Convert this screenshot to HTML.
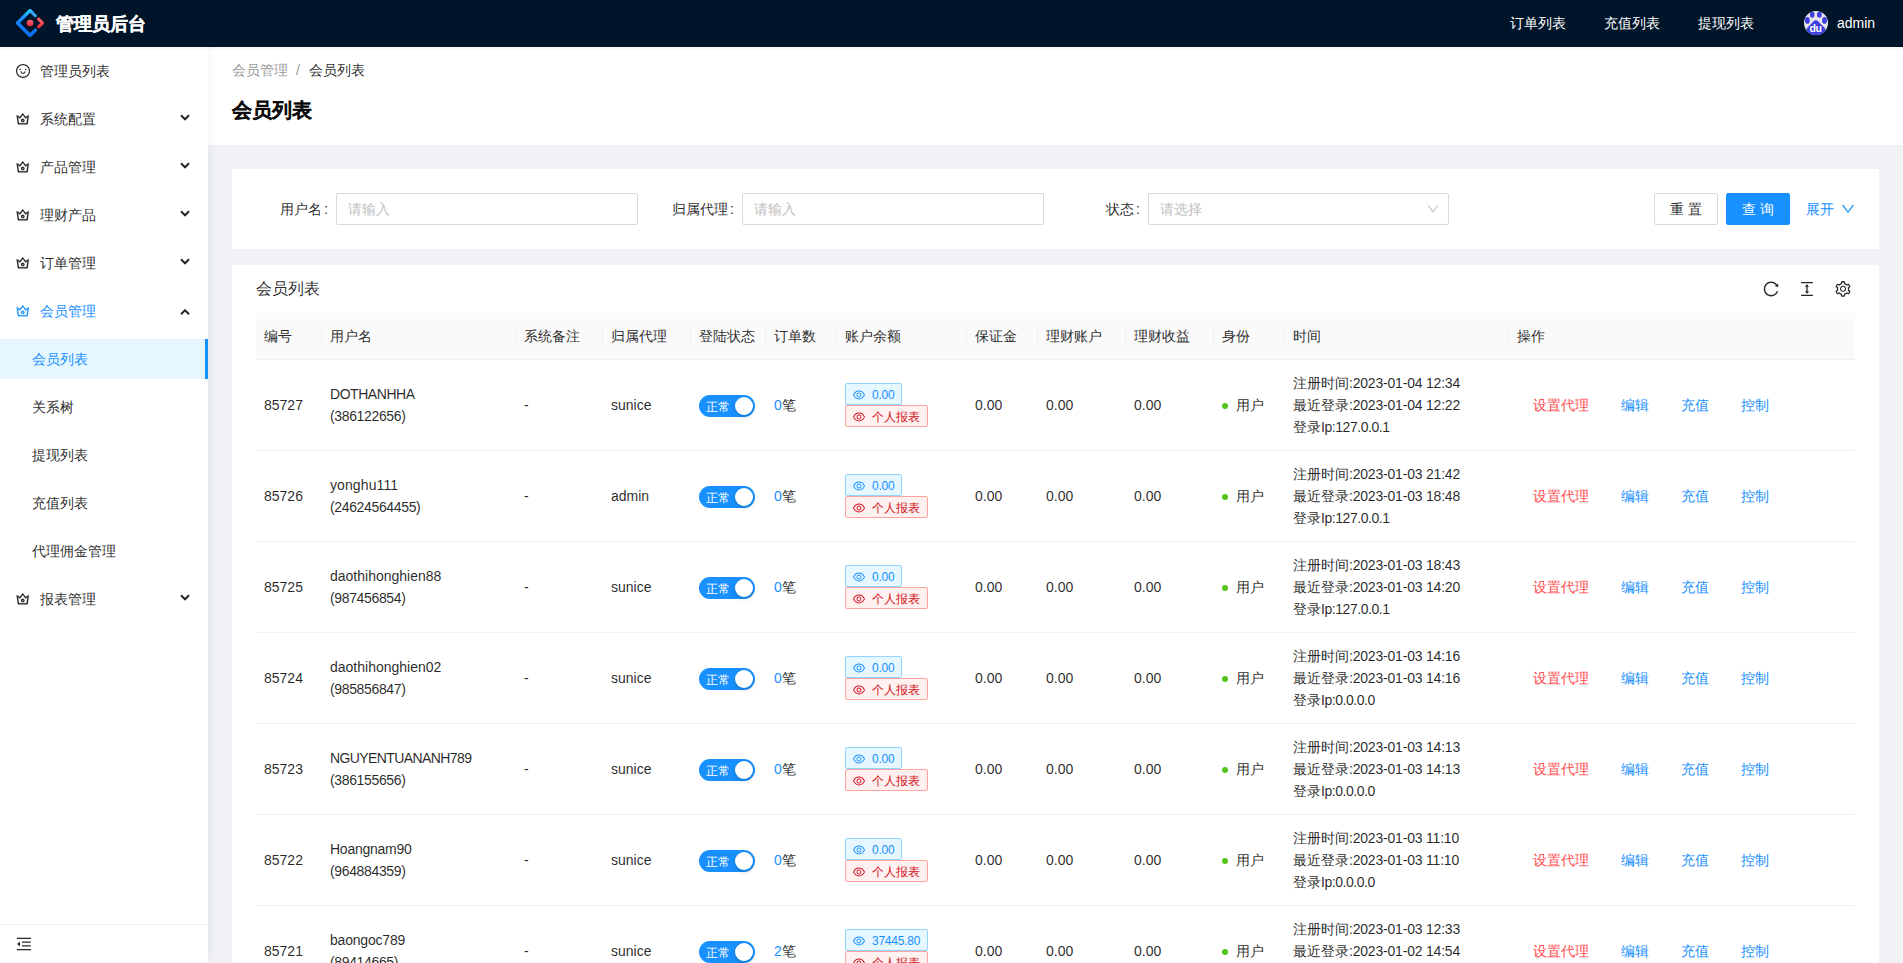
<!DOCTYPE html><html><head><meta charset="utf-8"><style>*{box-sizing:border-box;margin:0;padding:0}
html,body{width:1903px;height:963px;overflow:hidden;background:#f0f2f5;font-family:"Liberation Sans",sans-serif;font-size:14px;color:rgba(0,0,0,.85)}
.abs{position:absolute}
#hdr{position:absolute;left:0;top:0;width:1903px;height:47px;background:#001529;color:#fff;z-index:3;box-shadow:0 1px 4px rgba(0,21,41,.08)}
#hdr .title{position:absolute;left:56px;top:12px;font-size:18px;font-weight:bold;line-height:24px;color:#fff;-webkit-text-stroke:.3px #fff}
#hdr .nav{position:absolute;top:12px;line-height:22px;font-size:14px;color:#fff}
#side{position:absolute;left:0;top:47px;width:208px;height:916px;background:#fff;box-shadow:2px 0 8px 0 rgba(29,35,41,.05);z-index:2}
.mi{position:absolute;left:0;width:208px;height:40px;line-height:40px;font-size:14px;color:rgba(0,0,0,.85)}
.mi .tx{position:absolute;left:40px;top:0}
.mi .ar{position:absolute;left:180px;top:15px;width:10px;height:7px}
.mi.sub .tx{left:32px}
.mi.sel{background:#e6f7ff;color:#1890ff}
.mi.sel:after{content:"";position:absolute;right:0;top:0;width:3px;height:40px;background:#1890ff}
.mi.open{color:#1890ff}
#collapse{position:absolute;left:0;top:877px;width:208px;height:39px;border-top:1px solid #f0f0f0}
#ph{position:absolute;left:208px;top:47px;width:1695px;height:98px;background:#fff}
.bc{position:absolute;left:24px;top:12px;line-height:22px;font-size:14px}
.pt{position:absolute;left:24px;top:47px;line-height:32px;font-size:20px;font-weight:bold;color:rgba(0,0,0,.85);-webkit-text-stroke:.3px rgba(0,0,0,.85)}
.card{position:absolute;background:#fff}
.lbl{position:absolute;top:24px;line-height:32px;text-align:right;font-size:14px;padding-right:8px}
.inp{position:absolute;top:24px;height:32px;border:1px solid #d9d9d9;border-radius:2px;line-height:30px;padding-left:11px;color:#bfbfbf}
.btn{position:absolute;top:24px;height:32px;border-radius:2px;line-height:30px;text-align:center;font-size:14px}
table{border-collapse:collapse;table-layout:fixed}
th{background:#fafafa;font-weight:normal;text-align:left;height:46px;padding:0 8px;border-bottom:1px solid #f0f0f0;position:relative;line-height:22px}
th .sep{position:absolute;right:0;top:12px;width:1px;height:22px;background:#f0f0f0}
td{height:91px;padding:0 8px;border-bottom:1px solid #f0f0f0;line-height:22px;vertical-align:middle;white-space:nowrap}
.sw{display:inline-block;position:relative;top:1px;width:56px;height:22px;border-radius:11px;background:#1890ff;vertical-align:middle}
.sw .k{position:absolute;left:36px;top:2px;width:18px;height:18px;border-radius:50%;background:#fff;box-shadow:0 2px 4px rgba(0,35,11,.2)}
.sw .t{position:absolute;left:7px;top:1px;line-height:22px;font-size:12px;color:#fff}
.tags{display:inline-block;vertical-align:middle}
.tag{display:block;position:relative;width:max-content;height:22px;line-height:22px;font-size:12px;padding:0 7px 0 26px;border-radius:2px;border:1px solid;white-space:nowrap}
.tag svg{position:absolute;left:6px;top:4.4px}
.tb{color:#1890ff;background:#e6f7ff;border-color:#91d5ff}
.tr{color:#cf1322;background:#fff1f0;border-color:#ffa39e}
.dot{display:inline-block;width:6px;height:6px;border-radius:50%;background:#52c41a;vertical-align:middle;position:relative;top:0;margin-right:8px}
.act a{display:inline-block;padding:0 16px;color:#1890ff;text-decoration:none}
.act a.red{color:#ff4d4f}
</style></head><body>
<div id="hdr">
<svg class="abs" style="left:16px;top:9px" width="28" height="28" viewBox="0 0 200 200">
<defs>
<linearGradient x1="62.1%" y1="0%" x2="108.2%" y2="37.9%" id="lg1"><stop stop-color="#4285EB" offset="0%"/><stop stop-color="#2EC7FF" offset="100%"/></linearGradient>
<linearGradient x1="69.6%" y1="0%" x2="54.0%" y2="108.5%" id="lg2"><stop stop-color="#29CDFF" offset="0%"/><stop stop-color="#148EFF" offset="37.9%"/><stop stop-color="#0A60FF" offset="100%"/></linearGradient>
<linearGradient x1="69.7%" y1="-13%" x2="16.7%" y2="117.6%" id="lg3"><stop stop-color="#FA816E" offset="0%"/><stop stop-color="#F74A5C" offset="41.5%"/><stop stop-color="#F51D2C" offset="100%"/></linearGradient>
<linearGradient x1="68.1%" y1="-35.7%" x2="30.4%" y2="114.9%" id="lg4"><stop stop-color="#FA8E7D" offset="0%"/><stop stop-color="#F74A5C" offset="51.3%"/><stop stop-color="#F51D2C" offset="100%"/></linearGradient>
</defs>
<path fill="url(#lg1)" d="M91.588 4.177L4.18 91.513c-4.7 4.695-4.7 12.279 0 16.974l87.408 87.336c4.7 4.696 12.29 4.696 16.989 0l36.649-36.619c4.208-4.205 4.208-11.023 0-15.228-4.208-4.205-11.032-4.205-15.24 0l-27.783 27.76c-1.17 1.169-2.945 1.169-4.115 0l-69.801-69.744c-1.17-1.169-1.17-2.942 0-4.111l69.801-69.744c1.17-1.169 2.945-1.169 4.115 0l27.783 27.76c4.208 4.205 11.032 4.205 15.24 0 4.208-4.205 4.208-11.023 0-15.228L108.58 4.056c-4.718-4.594-12.311-4.557-16.992.121z"/>
<path fill="url(#lg2)" d="M91.588 4.177L4.18 91.513c-4.7 4.695-4.7 12.279 0 16.974l87.408 87.336c4.7 4.696 12.29 4.696 16.989 0l36.649-36.619c4.208-4.205 4.208-11.023 0-15.228-4.208-4.205-11.032-4.205-15.24 0l-27.783 27.76c-1.17 1.169-2.945 1.169-4.115 0l-69.801-69.744c-1.17-1.169-1.17-2.942 0-4.111l69.801-69.744c2.912-2.511 7.664-7.596 14.642-8.785 5.186-.884 10.856 1.061 17.009 5.836-4.114-4.11-11.167-11.155-21.158-21.133-4.718-4.594-12.311-4.557-16.992.121z"/>
<path fill="url(#lg3)" d="M153.686 135.855c4.208 4.205 11.032 4.205 15.24 0l27.034-27.012c4.7-4.696 4.7-12.28.001-16.974l-27.27-27.15c-4.218-4.2-11.043-4.195-15.254.013-4.209 4.205-4.209 11.023 0 15.228l18.418 18.403c.924.923.924 2.351 0 3.274l-18.168 18.152c-4.209 4.205-4.209 11.023 0 15.228z"/>
<ellipse fill="url(#lg4)" cx="100.52" cy="100.44" rx="23.6" ry="23.58"/>
</svg>
<div class="title">管理员后台</div>
<div class="nav" style="left:1510px">订单列表</div>
<div class="nav" style="left:1604px">充值列表</div>
<div class="nav" style="left:1698px">提现列表</div>
<svg class="abs" style="left:1804px;top:11px" width="24" height="24" viewBox="0 0 24 24">
<defs><clipPath id="avc"><circle cx="12" cy="12" r="12"/></clipPath></defs>
<circle cx="12" cy="12" r="12" fill="#e6e6e6"/>
<g clip-path="url(#avc)" fill="#3d3fe3">
<ellipse cx="8.25" cy="3.8" rx="2.3" ry="3"/><ellipse cx="15.4" cy="3.8" rx="2.4" ry="3"/>
<ellipse cx="3.35" cy="9.4" rx="2.4" ry="3.4"/><ellipse cx="20.5" cy="9.4" rx="2.4" ry="3.4"/>
<path d="M11.8 9.2 C10.2 9.2 9 10.6 7.6 12.6 C6.2 14.4 3.2 16.2 2.4 18.6 L4 24 L20 24 L21.6 18.6 C20.8 16.2 17.6 14.4 16.2 12.6 C14.8 10.6 13.4 9.2 11.8 9.2Z"/>
</g>
<text x="11.5" y="21.4" text-anchor="middle" font-family="Liberation Sans" font-weight="bold" font-size="10.5" letter-spacing="-0.3" fill="#fff">du</text>
</svg>
<div class="nav" style="left:1837px">admin</div>
</div>
<div id="side">
<div class="mi" style="top:4px">
<svg style="position:absolute;left:15px;top:12px" width="16" height="16" viewBox="0 0 1024 1024"><path fill="rgba(0,0,0,.85)" d="M288 421a48 48 0 1096 0 48 48 0 10-96 0zm352 0a48 48 0 1096 0 48 48 0 10-96 0zM512 64C264.6 64 64 264.6 64 512s200.6 448 448 448 448-200.6 448-448S759.4 64 512 64zm263 711c-34.2 34.2-74 61-118.3 79.8C611 874.2 562.3 884 512 884c-50.3 0-99-9.8-144.8-29.2A370.4 370.4 0 01248.9 775c-34.2-34.2-61-74-79.8-118.3C149.8 611 140 562.3 140 512s9.8-99 29.2-144.8A370.4 370.4 0 01249 248.9c34.2-34.2 74-61 118.3-79.8C413 149.8 461.7 140 512 140c50.3 0 99 9.8 144.8 29.2A370.4 370.4 0 01775.1 249c34.2 34.2 61 74 79.8 118.3C874.2 413 884 461.7 884 512s-9.8 99-29.2 144.8A368.89 368.89 0 01775 775zM664 533h-48.1c-4.2 0-7.8 3.2-8.1 7.4C604 589.9 562.5 629 512 629s-92.1-39.1-95.8-88.6c-.3-4.2-3.9-7.4-8.1-7.4H360a8 8 0 00-8 8.4c4.4 84.3 74.5 151.6 160 151.6s155.6-67.3 160-151.6a8 8 0 00-8-8.4z"/></svg>
<span class="tx">管理员列表</span>
</div>
<div class="mi" style="top:52px">
<svg style="position:absolute;left:15.3px;top:12.4px" width="15.5" height="15.5" viewBox="0 0 1024 1024"><path fill="rgba(0,0,0,.85)" stroke="rgba(0,0,0,.85)" stroke-width="22" d="M899.6 276.5L705 396.4 518.4 147.5a8.06 8.06 0 00-12.9 0L319 396.4 124.3 276.5c-5.7-3.5-13.1 1.2-12.2 7.9L188.5 865c1.1 7.9 7.9 14 16 14h615.1c8 0 14.9-6 15.9-14l76.4-580.6c.8-6.7-6.5-11.4-12.3-7.9zm-126 534.1H250.3l-53.8-409.4 139.8 86.1L512 252.9l175.7 234.4 139.8-86.1-53.9 409.4zM512 509c-62.1 0-112.6 50.5-112.6 112.6S449.9 734.2 512 734.2s112.6-50.5 112.6-112.6S574.1 509 512 509zm0 160.9c-26.6 0-48.2-21.6-48.2-48.3 0-26.6 21.6-48.3 48.2-48.3s48.2 21.6 48.2 48.3c0 26.6-21.6 48.3-48.2 48.3z"/></svg>
<span class="tx">系统配置</span>
<svg class="ar" viewBox="0 0 10 7"><path d="M1 1.3 L5 5.3 L9 1.3" fill="none" stroke="rgba(0,0,0,.85)" stroke-width="2"/></svg>
</div>
<div class="mi" style="top:100px">
<svg style="position:absolute;left:15.3px;top:12.4px" width="15.5" height="15.5" viewBox="0 0 1024 1024"><path fill="rgba(0,0,0,.85)" stroke="rgba(0,0,0,.85)" stroke-width="22" d="M899.6 276.5L705 396.4 518.4 147.5a8.06 8.06 0 00-12.9 0L319 396.4 124.3 276.5c-5.7-3.5-13.1 1.2-12.2 7.9L188.5 865c1.1 7.9 7.9 14 16 14h615.1c8 0 14.9-6 15.9-14l76.4-580.6c.8-6.7-6.5-11.4-12.3-7.9zm-126 534.1H250.3l-53.8-409.4 139.8 86.1L512 252.9l175.7 234.4 139.8-86.1-53.9 409.4zM512 509c-62.1 0-112.6 50.5-112.6 112.6S449.9 734.2 512 734.2s112.6-50.5 112.6-112.6S574.1 509 512 509zm0 160.9c-26.6 0-48.2-21.6-48.2-48.3 0-26.6 21.6-48.3 48.2-48.3s48.2 21.6 48.2 48.3c0 26.6-21.6 48.3-48.2 48.3z"/></svg>
<span class="tx">产品管理</span>
<svg class="ar" viewBox="0 0 10 7"><path d="M1 1.3 L5 5.3 L9 1.3" fill="none" stroke="rgba(0,0,0,.85)" stroke-width="2"/></svg>
</div>
<div class="mi" style="top:148px">
<svg style="position:absolute;left:15.3px;top:12.4px" width="15.5" height="15.5" viewBox="0 0 1024 1024"><path fill="rgba(0,0,0,.85)" stroke="rgba(0,0,0,.85)" stroke-width="22" d="M899.6 276.5L705 396.4 518.4 147.5a8.06 8.06 0 00-12.9 0L319 396.4 124.3 276.5c-5.7-3.5-13.1 1.2-12.2 7.9L188.5 865c1.1 7.9 7.9 14 16 14h615.1c8 0 14.9-6 15.9-14l76.4-580.6c.8-6.7-6.5-11.4-12.3-7.9zm-126 534.1H250.3l-53.8-409.4 139.8 86.1L512 252.9l175.7 234.4 139.8-86.1-53.9 409.4zM512 509c-62.1 0-112.6 50.5-112.6 112.6S449.9 734.2 512 734.2s112.6-50.5 112.6-112.6S574.1 509 512 509zm0 160.9c-26.6 0-48.2-21.6-48.2-48.3 0-26.6 21.6-48.3 48.2-48.3s48.2 21.6 48.2 48.3c0 26.6-21.6 48.3-48.2 48.3z"/></svg>
<span class="tx">理财产品</span>
<svg class="ar" viewBox="0 0 10 7"><path d="M1 1.3 L5 5.3 L9 1.3" fill="none" stroke="rgba(0,0,0,.85)" stroke-width="2"/></svg>
</div>
<div class="mi" style="top:196px">
<svg style="position:absolute;left:15.3px;top:12.4px" width="15.5" height="15.5" viewBox="0 0 1024 1024"><path fill="rgba(0,0,0,.85)" stroke="rgba(0,0,0,.85)" stroke-width="22" d="M899.6 276.5L705 396.4 518.4 147.5a8.06 8.06 0 00-12.9 0L319 396.4 124.3 276.5c-5.7-3.5-13.1 1.2-12.2 7.9L188.5 865c1.1 7.9 7.9 14 16 14h615.1c8 0 14.9-6 15.9-14l76.4-580.6c.8-6.7-6.5-11.4-12.3-7.9zm-126 534.1H250.3l-53.8-409.4 139.8 86.1L512 252.9l175.7 234.4 139.8-86.1-53.9 409.4zM512 509c-62.1 0-112.6 50.5-112.6 112.6S449.9 734.2 512 734.2s112.6-50.5 112.6-112.6S574.1 509 512 509zm0 160.9c-26.6 0-48.2-21.6-48.2-48.3 0-26.6 21.6-48.3 48.2-48.3s48.2 21.6 48.2 48.3c0 26.6-21.6 48.3-48.2 48.3z"/></svg>
<span class="tx">订单管理</span>
<svg class="ar" viewBox="0 0 10 7"><path d="M1 1.3 L5 5.3 L9 1.3" fill="none" stroke="rgba(0,0,0,.85)" stroke-width="2"/></svg>
</div>
<div class="mi open" style="top:244px">
<svg style="position:absolute;left:15.3px;top:12.4px" width="15.5" height="15.5" viewBox="0 0 1024 1024"><path fill="#1890ff" stroke="#1890ff" stroke-width="22" d="M899.6 276.5L705 396.4 518.4 147.5a8.06 8.06 0 00-12.9 0L319 396.4 124.3 276.5c-5.7-3.5-13.1 1.2-12.2 7.9L188.5 865c1.1 7.9 7.9 14 16 14h615.1c8 0 14.9-6 15.9-14l76.4-580.6c.8-6.7-6.5-11.4-12.3-7.9zm-126 534.1H250.3l-53.8-409.4 139.8 86.1L512 252.9l175.7 234.4 139.8-86.1-53.9 409.4zM512 509c-62.1 0-112.6 50.5-112.6 112.6S449.9 734.2 512 734.2s112.6-50.5 112.6-112.6S574.1 509 512 509zm0 160.9c-26.6 0-48.2-21.6-48.2-48.3 0-26.6 21.6-48.3 48.2-48.3s48.2 21.6 48.2 48.3c0 26.6-21.6 48.3-48.2 48.3z"/></svg>
<span class="tx">会员管理</span>
<svg class="ar" style="top:18px" viewBox="0 0 10 7"><path d="M1 5.3 L5 1.3 L9 5.3" fill="none" stroke="rgba(0,0,0,.85)" stroke-width="2"/></svg>
</div>
<div class="mi sub sel" style="top:292px">
<span class="tx">会员列表</span>
</div>
<div class="mi sub" style="top:340px">
<span class="tx">关系树</span>
</div>
<div class="mi sub" style="top:388px">
<span class="tx">提现列表</span>
</div>
<div class="mi sub" style="top:436px">
<span class="tx">充值列表</span>
</div>
<div class="mi sub" style="top:484px">
<span class="tx">代理佣金管理</span>
</div>
<div class="mi" style="top:532px">
<svg style="position:absolute;left:15.3px;top:12.4px" width="15.5" height="15.5" viewBox="0 0 1024 1024"><path fill="rgba(0,0,0,.85)" stroke="rgba(0,0,0,.85)" stroke-width="22" d="M899.6 276.5L705 396.4 518.4 147.5a8.06 8.06 0 00-12.9 0L319 396.4 124.3 276.5c-5.7-3.5-13.1 1.2-12.2 7.9L188.5 865c1.1 7.9 7.9 14 16 14h615.1c8 0 14.9-6 15.9-14l76.4-580.6c.8-6.7-6.5-11.4-12.3-7.9zm-126 534.1H250.3l-53.8-409.4 139.8 86.1L512 252.9l175.7 234.4 139.8-86.1-53.9 409.4zM512 509c-62.1 0-112.6 50.5-112.6 112.6S449.9 734.2 512 734.2s112.6-50.5 112.6-112.6S574.1 509 512 509zm0 160.9c-26.6 0-48.2-21.6-48.2-48.3 0-26.6 21.6-48.3 48.2-48.3s48.2 21.6 48.2 48.3c0 26.6-21.6 48.3-48.2 48.3z"/></svg>
<span class="tx">报表管理</span>
<svg class="ar" viewBox="0 0 10 7"><path d="M1 1.3 L5 5.3 L9 1.3" fill="none" stroke="rgba(0,0,0,.85)" stroke-width="2"/></svg>
</div>
<div id="collapse"><svg style="position:absolute;left:15px;top:9.5px" width="18" height="18" viewBox="0 0 1024 1024"><path fill="rgba(0,0,0,.85)" d="M408 442h480c4.4 0 8-3.6 8-8v-56c0-4.4-3.6-8-8-8H408c-4.4 0-8 3.6-8 8v56c0 4.4 3.6 8 8 8zm-8 204c0 4.4 3.6 8 8 8h480c4.4 0 8-3.6 8-8v-56c0-4.4-3.6-8-8-8H408c-4.4 0-8 3.6-8 8v56zm504-486H120c-4.4 0-8 3.6-8 8v56c0 4.4 3.6 8 8 8h784c4.4 0 8-3.6 8-8v-56c0-4.4-3.6-8-8-8zm0 632H120c-4.4 0-8 3.6-8 8v56c0 4.4 3.6 8 8 8h784c4.4 0 8-3.6 8-8v-56c0-4.4-3.6-8-8-8zM115.4 518.9L271.7 642c5.8 4.6 14.4.5 14.4-6.9V388.9c0-7.4-8.5-11.5-14.4-6.9L115.4 505.1a8.74 8.74 0 000 13.8z"/></svg></div>
</div>
<div id="ph">
<div class="bc"><span style="color:rgba(0,0,0,.45)">会员管理</span><span style="color:rgba(0,0,0,.45);padding:0 9px 0 8px">/</span><span>会员列表</span></div>
<div class="pt">会员列表</div>
</div>
<div class="card" id="search" style="left:232px;top:169px;width:1647px;height:80px">
<div class="lbl" style="left:24px;width:80px">用户名<span style="margin-left:2px">:</span></div>
<div class="inp" style="left:104px;width:302px">请输入
</div>
<div class="lbl" style="left:430px;width:80px">归属代理<span style="margin-left:2px">:</span></div>
<div class="inp" style="left:510px;width:302px">请输入
</div>
<div class="lbl" style="left:836px;width:80px">状态<span style="margin-left:2px">:</span></div>
<div class="inp" style="left:916px;width:301px">请选择
<svg style="position:absolute;left:277px;top:7.5px" width="14" height="14" viewBox="0 0 1024 1024"><path fill="#bfbfbf" d="M884 256h-75c-5.1 0-9.9 2.5-12.9 6.6L512 654.2 227.9 262.6c-3-4.1-7.8-6.6-12.9-6.6h-75c-6.5 0-10.3 7.4-6.5 12.7l352.6 486.1c12.8 17.6 39 17.6 51.700 0l352.6-486.1c3.9-5.3.1-12.7-6.4-12.7z"/></svg>
</div>
<div class="btn" style="left:1422px;width:64px;border:1px solid #d9d9d9;color:rgba(0,0,0,.85)">重 置</div>
<div class="btn" style="left:1494px;width:64px;background:#1890ff;color:#fff;border:1px solid #1890ff">查 询</div>
<div class="abs" style="left:1574px;top:24px;line-height:32px;color:#1890ff">展开</div>
<svg class="abs" style="left:1608px;top:31.5px;" width="16" height="16" viewBox="0 0 1024 1024"><path fill="#1890ff" d="M884 256h-75c-5.1 0-9.9 2.5-12.9 6.6L512 654.2 227.9 262.6c-3-4.1-7.8-6.6-12.9-6.6h-75c-6.5 0-10.3 7.4-6.5 12.7l352.6 486.1c12.8 17.6 39 17.6 51.700 0l352.6-486.1c3.9-5.3.1-12.7-6.4-12.7z"/></svg>
</div>
<div class="card" id="tcard" style="left:232px;top:265px;width:1647px;height:720px;border-radius:2px">
<div class="abs" style="left:24px;top:12px;line-height:24px;font-size:16px;color:rgba(0,0,0,.85)">会员列表</div>
<svg class="abs" style="left:1530px;top:15px;" width="18" height="18" viewBox="0 0 1024 1024"><path fill="rgba(0,0,0,.85)" d="M909.1 209.3l-56.4 44.1C775.8 155.1 656.2 92 521.9 92 290 92 102.3 279.5 102 511.5 101.7 743.7 289.8 932 521.9 932c181.3 0 335.8-115 394.6-276.1 1.5-4.2-.7-8.9-4.9-10.3l-56.7-19.5a8 8 0 00-10.1 4.8c-1.8 5-3.8 10-5.900 14.9-17.3 41-42.1 77.8-73.7 109.4A344.77 344.77 0 01655.9 829c-42.3 17.9-87.4 27-133.8 27-46.5 0-91.5-9.1-133.8-27A341.5 341.5 0 01279 755.2a342.16 342.16 0 01-73.7-109.4c-17.9-42.4-27-87.4-27-133.9s9.1-91.5 27-133.9c17.3-41 42.1-77.8 73.7-109.4 31.6-31.6 68.4-56.4 109.3-73.8 42.3-17.9 87.4-27 133.8-27 46.5 0 91.5 9.1 133.8 27a341.5 341.5 0 01109.3 73.8c9.9 9.9 19.2 20.4 27.8 31.4l-60.2 47a8 8 0 003 14.1l175.6 43c5 1.2 9.9-2.6 9.9-7.7l.8-180.9c-.1-6.6-7.8-10.3-13-6.2z"/></svg>
<svg class="abs" style="left:1566px;top:15px;" width="18" height="18" viewBox="0 0 1024 1024"><path fill="rgba(0,0,0,.85)" d="M840 836H184c-4.4 0-8 3.6-8 8v60c0 4.4 3.6 8 8 8h656c4.4 0 8-3.6 8-8v-60c0-4.4-3.6-8-8-8zm0-724H184c-4.4 0-8 3.6-8 8v60c0 4.4 3.6 8 8 8h656c4.4 0 8-3.6 8-8v-60c0-4.4-3.6-8-8-8zM610.8 378c6 0 9.4-7 5.7-11.7L515.7 238.7a7.14 7.14 0 00-11.3 0L403.6 366.3a7.23 7.23 0 005.7 11.7H476v268h-62.8c-6 0-9.4 7-5.700 11.7l100.8 127.5c2.9 3.7 8.5 3.7 11.3 0l100.8-127.5c3.7-4.7.4-11.700-5.7-11.7H548V378h62.8z"/></svg>
<svg class="abs" style="left:1602px;top:15px;" width="18" height="18" viewBox="0 0 1024 1024"><path fill="rgba(0,0,0,.85)" d="M924.8 625.7l-65.5-56c3.1-19 4.7-38.4 4.7-57.8s-1.6-38.8-4.7-57.8l65.5-56a32.03 32.03 0 009.3-35.2l-.9-2.6a443.74 443.74 0 00-79.7-137.9l-1.8-2.1a32.12 32.12 0 00-35.1-9.5l-81.3 28.9c-30-24.6-63.5-44-99.7-57.6l-15.7-85a32.05 32.05 0 00-25.8-25.7l-2.7-.5c-52.1-9.4-106.9-9.4-159 0l-2.7.5a32.05 32.05 0 00-25.8 25.7l-15.8 85.4a351.86 351.86 0 00-99 57.4l-81.9-29.1a32 32 0 00-35.1 9.5l-1.8 2.1a446.02 446.02 0 00-79.7 137.9l-.9 2.6c-4.5 12.5-.8 26.5 9.3 35.2l66.3 56.6c-3.100 18.8-4.6 38-4.6 57.1 0 19.2 1.5 38.4 4.6 57.1L99 625.5a32.03 32.03 0 00-9.3 35.2l.9 2.6c18.1 50.4 44.9 96.9 79.7 137.9l1.8 2.1a32.12 32.12 0 0035.1 9.5l81.9-29.1c29.8 24.5 63.1 43.9 99 57.4l15.8 85.4a32.05 32.05 0 0025.8 25.7l2.7.5a449.4 449.4 0 00159 0l2.7-.5a32.05 32.05 0 0025.8-25.7l15.7-85a350 350 0 0099.7-57.6l81.3 28.9a32 32 0 0035.1-9.5l1.8-2.1c34.8-41.1 61.6-87.5 79.7-137.9l.9-2.6c4.5-12.3.8-26.3-9.3-35zM788.3 465.9c2.5 15.1 3.8 30.6 3.8 46.1s-1.3 31-3.8 46.1l-6.6 40.1 74.7 63.9a370.03 370.03 0 01-42.6 73.6L721 702.8l-31.4 25.8c-23.9 19.6-50.5 35-79.3 45.8l-38.1 14.3-17.900 97a377.5 377.5 0 01-85 0l-17.9-97.2-37.8-14.5c-28.5-10.8-55-26.2-78.7-45.7l-31.4-25.9-93.4 33.2c-17-22.9-31.2-47.6-42.6-73.6l75.5-64.5-6.5-40c-2.4-14.9-3.7-30.3-3.7-45.5 0-15.3 1.2-30.6 3.7-45.5l6.5-40-75.5-64.5c11.3-26.1 25.6-50.7 42.6-73.6l93.4 33.2 31.4-25.9c23.7-19.5 50.2-34.9 78.700-45.7l37.9-14.3 17.9-97.2c28.1-3.2 56.8-3.2 85 0l17.9 97 38.1 14.3c28.7 10.8 55.4 26.2 79.3 45.8l31.4 25.8 92.8-32.9c17 22.9 31.2 47.6 42.6 73.6L781.8 426l6.5 39.9zM512 326c-97.2 0-176 78.8-176 176s78.8 176 176 176 176-78.8 176-176-78.8-176-176-176zm79.2 255.2A111.6 111.6 0 01512 614c-29.9 0-58-11.7-79.2-32.8A111.6 111.6 0 01400 502c0-29.9 11.7-58 32.8-79.2C454 401.6 482.1 390 512 390c29.9 0 58 11.6 79.2 32.8A111.6 111.6 0 01624 502c0 29.9-11.7 58-32.8 79.2z"/></svg>
<table class="abs" style="left:24px;top:48px;width:1599px">
<colgroup><col style="width:66px"><col style="width:194px"><col style="width:87px"><col style="width:88px"><col style="width:75px"><col style="width:71px"><col style="width:130px"><col style="width:71px"><col style="width:88px"><col style="width:88px"><col style="width:71px"><col style="width:224px"><col style="width:346px"></colgroup>
<tr><th>编号<i class="sep"></i></th><th>用户名<i class="sep"></i></th><th>系统备注<i class="sep"></i></th><th>归属代理<i class="sep"></i></th><th>登陆状态<i class="sep"></i></th><th>订单数<i class="sep"></i></th><th>账户余额<i class="sep"></i></th><th>保证金<i class="sep"></i></th><th>理财账户<i class="sep"></i></th><th>理财收益<i class="sep"></i></th><th>身份<i class="sep"></i></th><th>时间<i class="sep"></i></th><th>操作</th></tr>
<tr>
<td>85727</td>
<td><span style="letter-spacing:-0.45px">DOTHANHHA</span><br><span style="letter-spacing:-.35px">(386122656)</span></td>
<td>-</td>
<td>sunice</td>
<td><span class="sw"><span class="t">正常</span><span class="k"></span></span></td>
<td><span style="color:#1890ff">0</span>笔</td>
<td><span class="tags"><span class="tag tb"><svg style="" width="14" height="14" viewBox="0 0 1024 1024"><path fill="#1890ff" d="M942.2 486.2C847.4 286.5 704.1 186 512 186c-192.2 0-335.4 100.5-430.2 300.3a60.3 60.3 0 000 51.5C176.6 737.5 319.9 838 512 838c192.2 0 335.4-100.5 430.2-300.3 7.7-16.2 7.7-35 0-51.5zM512 766c-161.3 0-279.4-81.8-362.7-254C232.6 339.8 350.7 258 512 258c161.3 0 279.4 81.8 362.7 254C791.5 684.2 673.4 766 512 766zm-4-430c-97.2 0-176 78.8-176 176s78.8 176 176 176 176-78.8 176-176-78.8-176-176-176zm0 288c-61.9 0-112-50.1-112-112s50.1-112 112-112 112 50.1 112 112-50.1 112-112 112z"/></svg><span style="letter-spacing:-.25px">0.00</span></span><span class="tag tr"><svg style="" width="14" height="14" viewBox="0 0 1024 1024"><path fill="#cf1322" d="M942.2 486.2C847.4 286.5 704.1 186 512 186c-192.2 0-335.4 100.5-430.2 300.3a60.3 60.3 0 000 51.5C176.6 737.5 319.9 838 512 838c192.2 0 335.4-100.5 430.2-300.3 7.7-16.2 7.7-35 0-51.5zM512 766c-161.3 0-279.4-81.8-362.7-254C232.6 339.8 350.7 258 512 258c161.3 0 279.4 81.8 362.7 254C791.5 684.2 673.4 766 512 766zm-4-430c-97.2 0-176 78.8-176 176s78.8 176 176 176 176-78.8 176-176-78.8-176-176-176zm0 288c-61.9 0-112-50.1-112-112s50.1-112 112-112 112 50.1 112 112-50.1 112-112 112z"/></svg>个人报表</span></span></td>
<td>0.00</td><td>0.00</td><td>0.00</td>
<td><span class="dot"></span>用户</td>
<td>注册时间<span style="letter-spacing:-.2px">:2023-01-04 12:34</span><br>最近登录<span style="letter-spacing:-.2px">:2023-01-04 12:22</span><br>登录<span style="letter-spacing:-.45px">Ip:127.0.0.1</span></td>
<td class="act"><a class="red">设置代理</a><a>编辑</a><a>充值</a><a>控制</a></td>
</tr>
<tr>
<td>85726</td>
<td><span style="letter-spacing:0.1px">yonghu111</span><br><span style="letter-spacing:-.35px">(24624564455)</span></td>
<td>-</td>
<td>admin</td>
<td><span class="sw"><span class="t">正常</span><span class="k"></span></span></td>
<td><span style="color:#1890ff">0</span>笔</td>
<td><span class="tags"><span class="tag tb"><svg style="" width="14" height="14" viewBox="0 0 1024 1024"><path fill="#1890ff" d="M942.2 486.2C847.4 286.5 704.1 186 512 186c-192.2 0-335.4 100.5-430.2 300.3a60.3 60.3 0 000 51.5C176.6 737.5 319.9 838 512 838c192.2 0 335.4-100.5 430.2-300.3 7.7-16.2 7.7-35 0-51.5zM512 766c-161.3 0-279.4-81.8-362.7-254C232.6 339.8 350.7 258 512 258c161.3 0 279.4 81.8 362.7 254C791.5 684.2 673.4 766 512 766zm-4-430c-97.2 0-176 78.8-176 176s78.8 176 176 176 176-78.8 176-176-78.8-176-176-176zm0 288c-61.9 0-112-50.1-112-112s50.1-112 112-112 112 50.1 112 112-50.1 112-112 112z"/></svg><span style="letter-spacing:-.25px">0.00</span></span><span class="tag tr"><svg style="" width="14" height="14" viewBox="0 0 1024 1024"><path fill="#cf1322" d="M942.2 486.2C847.4 286.5 704.1 186 512 186c-192.2 0-335.4 100.5-430.2 300.3a60.3 60.3 0 000 51.5C176.6 737.5 319.9 838 512 838c192.2 0 335.4-100.5 430.2-300.3 7.7-16.2 7.7-35 0-51.5zM512 766c-161.3 0-279.4-81.8-362.7-254C232.6 339.8 350.7 258 512 258c161.3 0 279.4 81.8 362.7 254C791.5 684.2 673.4 766 512 766zm-4-430c-97.2 0-176 78.8-176 176s78.8 176 176 176 176-78.8 176-176-78.8-176-176-176zm0 288c-61.9 0-112-50.1-112-112s50.1-112 112-112 112 50.1 112 112-50.1 112-112 112z"/></svg>个人报表</span></span></td>
<td>0.00</td><td>0.00</td><td>0.00</td>
<td><span class="dot"></span>用户</td>
<td>注册时间<span style="letter-spacing:-.2px">:2023-01-03 21:42</span><br>最近登录<span style="letter-spacing:-.2px">:2023-01-03 18:48</span><br>登录<span style="letter-spacing:-.45px">Ip:127.0.0.1</span></td>
<td class="act"><a class="red">设置代理</a><a>编辑</a><a>充值</a><a>控制</a></td>
</tr>
<tr>
<td>85725</td>
<td><span style="letter-spacing:0px">daothihonghien88</span><br><span style="letter-spacing:-.35px">(987456854)</span></td>
<td>-</td>
<td>sunice</td>
<td><span class="sw"><span class="t">正常</span><span class="k"></span></span></td>
<td><span style="color:#1890ff">0</span>笔</td>
<td><span class="tags"><span class="tag tb"><svg style="" width="14" height="14" viewBox="0 0 1024 1024"><path fill="#1890ff" d="M942.2 486.2C847.4 286.5 704.1 186 512 186c-192.2 0-335.4 100.5-430.2 300.3a60.3 60.3 0 000 51.5C176.6 737.5 319.9 838 512 838c192.2 0 335.4-100.5 430.2-300.3 7.7-16.2 7.7-35 0-51.5zM512 766c-161.3 0-279.4-81.8-362.7-254C232.6 339.8 350.7 258 512 258c161.3 0 279.4 81.8 362.7 254C791.5 684.2 673.4 766 512 766zm-4-430c-97.2 0-176 78.8-176 176s78.8 176 176 176 176-78.8 176-176-78.8-176-176-176zm0 288c-61.9 0-112-50.1-112-112s50.1-112 112-112 112 50.1 112 112-50.1 112-112 112z"/></svg><span style="letter-spacing:-.25px">0.00</span></span><span class="tag tr"><svg style="" width="14" height="14" viewBox="0 0 1024 1024"><path fill="#cf1322" d="M942.2 486.2C847.4 286.5 704.1 186 512 186c-192.2 0-335.4 100.5-430.2 300.3a60.3 60.3 0 000 51.5C176.6 737.5 319.9 838 512 838c192.2 0 335.4-100.5 430.2-300.3 7.7-16.2 7.7-35 0-51.5zM512 766c-161.3 0-279.4-81.8-362.7-254C232.6 339.8 350.7 258 512 258c161.3 0 279.4 81.8 362.7 254C791.5 684.2 673.4 766 512 766zm-4-430c-97.2 0-176 78.8-176 176s78.8 176 176 176 176-78.8 176-176-78.8-176-176-176zm0 288c-61.9 0-112-50.1-112-112s50.1-112 112-112 112 50.1 112 112-50.1 112-112 112z"/></svg>个人报表</span></span></td>
<td>0.00</td><td>0.00</td><td>0.00</td>
<td><span class="dot"></span>用户</td>
<td>注册时间<span style="letter-spacing:-.2px">:2023-01-03 18:43</span><br>最近登录<span style="letter-spacing:-.2px">:2023-01-03 14:20</span><br>登录<span style="letter-spacing:-.45px">Ip:127.0.0.1</span></td>
<td class="act"><a class="red">设置代理</a><a>编辑</a><a>充值</a><a>控制</a></td>
</tr>
<tr>
<td>85724</td>
<td><span style="letter-spacing:0px">daothihonghien02</span><br><span style="letter-spacing:-.35px">(985856847)</span></td>
<td>-</td>
<td>sunice</td>
<td><span class="sw"><span class="t">正常</span><span class="k"></span></span></td>
<td><span style="color:#1890ff">0</span>笔</td>
<td><span class="tags"><span class="tag tb"><svg style="" width="14" height="14" viewBox="0 0 1024 1024"><path fill="#1890ff" d="M942.2 486.2C847.4 286.5 704.1 186 512 186c-192.2 0-335.4 100.5-430.2 300.3a60.3 60.3 0 000 51.5C176.6 737.5 319.9 838 512 838c192.2 0 335.4-100.5 430.2-300.3 7.7-16.2 7.7-35 0-51.5zM512 766c-161.3 0-279.4-81.8-362.7-254C232.6 339.8 350.7 258 512 258c161.3 0 279.4 81.8 362.7 254C791.5 684.2 673.4 766 512 766zm-4-430c-97.2 0-176 78.8-176 176s78.8 176 176 176 176-78.8 176-176-78.8-176-176-176zm0 288c-61.9 0-112-50.1-112-112s50.1-112 112-112 112 50.1 112 112-50.1 112-112 112z"/></svg><span style="letter-spacing:-.25px">0.00</span></span><span class="tag tr"><svg style="" width="14" height="14" viewBox="0 0 1024 1024"><path fill="#cf1322" d="M942.2 486.2C847.4 286.5 704.1 186 512 186c-192.2 0-335.4 100.5-430.2 300.3a60.3 60.3 0 000 51.5C176.6 737.5 319.9 838 512 838c192.2 0 335.4-100.5 430.2-300.3 7.7-16.2 7.7-35 0-51.5zM512 766c-161.3 0-279.4-81.8-362.7-254C232.6 339.8 350.7 258 512 258c161.3 0 279.4 81.8 362.7 254C791.5 684.2 673.4 766 512 766zm-4-430c-97.2 0-176 78.8-176 176s78.8 176 176 176 176-78.8 176-176-78.8-176-176-176zm0 288c-61.9 0-112-50.1-112-112s50.1-112 112-112 112 50.1 112 112-50.1 112-112 112z"/></svg>个人报表</span></span></td>
<td>0.00</td><td>0.00</td><td>0.00</td>
<td><span class="dot"></span>用户</td>
<td>注册时间<span style="letter-spacing:-.2px">:2023-01-03 14:16</span><br>最近登录<span style="letter-spacing:-.2px">:2023-01-03 14:16</span><br>登录<span style="letter-spacing:-.45px">Ip:0.0.0.0</span></td>
<td class="act"><a class="red">设置代理</a><a>编辑</a><a>充值</a><a>控制</a></td>
</tr>
<tr>
<td>85723</td>
<td><span style="letter-spacing:-0.6px">NGUYENTUANANH789</span><br><span style="letter-spacing:-.35px">(386155656)</span></td>
<td>-</td>
<td>sunice</td>
<td><span class="sw"><span class="t">正常</span><span class="k"></span></span></td>
<td><span style="color:#1890ff">0</span>笔</td>
<td><span class="tags"><span class="tag tb"><svg style="" width="14" height="14" viewBox="0 0 1024 1024"><path fill="#1890ff" d="M942.2 486.2C847.4 286.5 704.1 186 512 186c-192.2 0-335.4 100.5-430.2 300.3a60.3 60.3 0 000 51.5C176.6 737.5 319.9 838 512 838c192.2 0 335.4-100.5 430.2-300.3 7.7-16.2 7.7-35 0-51.5zM512 766c-161.3 0-279.4-81.8-362.7-254C232.6 339.8 350.7 258 512 258c161.3 0 279.4 81.8 362.7 254C791.5 684.2 673.4 766 512 766zm-4-430c-97.2 0-176 78.8-176 176s78.8 176 176 176 176-78.8 176-176-78.8-176-176-176zm0 288c-61.9 0-112-50.1-112-112s50.1-112 112-112 112 50.1 112 112-50.1 112-112 112z"/></svg><span style="letter-spacing:-.25px">0.00</span></span><span class="tag tr"><svg style="" width="14" height="14" viewBox="0 0 1024 1024"><path fill="#cf1322" d="M942.2 486.2C847.4 286.5 704.1 186 512 186c-192.2 0-335.4 100.5-430.2 300.3a60.3 60.3 0 000 51.5C176.6 737.5 319.9 838 512 838c192.2 0 335.4-100.5 430.2-300.3 7.7-16.2 7.7-35 0-51.5zM512 766c-161.3 0-279.4-81.8-362.7-254C232.6 339.8 350.7 258 512 258c161.3 0 279.4 81.8 362.7 254C791.5 684.2 673.4 766 512 766zm-4-430c-97.2 0-176 78.8-176 176s78.8 176 176 176 176-78.8 176-176-78.8-176-176-176zm0 288c-61.9 0-112-50.1-112-112s50.1-112 112-112 112 50.1 112 112-50.1 112-112 112z"/></svg>个人报表</span></span></td>
<td>0.00</td><td>0.00</td><td>0.00</td>
<td><span class="dot"></span>用户</td>
<td>注册时间<span style="letter-spacing:-.2px">:2023-01-03 14:13</span><br>最近登录<span style="letter-spacing:-.2px">:2023-01-03 14:13</span><br>登录<span style="letter-spacing:-.45px">Ip:0.0.0.0</span></td>
<td class="act"><a class="red">设置代理</a><a>编辑</a><a>充值</a><a>控制</a></td>
</tr>
<tr>
<td>85722</td>
<td><span style="letter-spacing:-0.25px">Hoangnam90</span><br><span style="letter-spacing:-.35px">(964884359)</span></td>
<td>-</td>
<td>sunice</td>
<td><span class="sw"><span class="t">正常</span><span class="k"></span></span></td>
<td><span style="color:#1890ff">0</span>笔</td>
<td><span class="tags"><span class="tag tb"><svg style="" width="14" height="14" viewBox="0 0 1024 1024"><path fill="#1890ff" d="M942.2 486.2C847.4 286.5 704.1 186 512 186c-192.2 0-335.4 100.5-430.2 300.3a60.3 60.3 0 000 51.5C176.6 737.5 319.9 838 512 838c192.2 0 335.4-100.5 430.2-300.3 7.7-16.2 7.7-35 0-51.5zM512 766c-161.3 0-279.4-81.8-362.7-254C232.6 339.8 350.7 258 512 258c161.3 0 279.4 81.8 362.7 254C791.5 684.2 673.4 766 512 766zm-4-430c-97.2 0-176 78.8-176 176s78.8 176 176 176 176-78.8 176-176-78.8-176-176-176zm0 288c-61.9 0-112-50.1-112-112s50.1-112 112-112 112 50.1 112 112-50.1 112-112 112z"/></svg><span style="letter-spacing:-.25px">0.00</span></span><span class="tag tr"><svg style="" width="14" height="14" viewBox="0 0 1024 1024"><path fill="#cf1322" d="M942.2 486.2C847.4 286.5 704.1 186 512 186c-192.2 0-335.4 100.5-430.2 300.3a60.3 60.3 0 000 51.5C176.6 737.5 319.9 838 512 838c192.2 0 335.4-100.5 430.2-300.3 7.7-16.2 7.7-35 0-51.5zM512 766c-161.3 0-279.4-81.8-362.7-254C232.6 339.8 350.7 258 512 258c161.3 0 279.4 81.8 362.7 254C791.5 684.2 673.4 766 512 766zm-4-430c-97.2 0-176 78.8-176 176s78.8 176 176 176 176-78.8 176-176-78.8-176-176-176zm0 288c-61.9 0-112-50.1-112-112s50.1-112 112-112 112 50.1 112 112-50.1 112-112 112z"/></svg>个人报表</span></span></td>
<td>0.00</td><td>0.00</td><td>0.00</td>
<td><span class="dot"></span>用户</td>
<td>注册时间<span style="letter-spacing:-.2px">:2023-01-03 11:10</span><br>最近登录<span style="letter-spacing:-.2px">:2023-01-03 11:10</span><br>登录<span style="letter-spacing:-.45px">Ip:0.0.0.0</span></td>
<td class="act"><a class="red">设置代理</a><a>编辑</a><a>充值</a><a>控制</a></td>
</tr>
<tr>
<td>85721</td>
<td><span style="letter-spacing:-0.2px">baongoc789</span><br><span style="letter-spacing:-.35px">(89414665)</span></td>
<td>-</td>
<td>sunice</td>
<td><span class="sw"><span class="t">正常</span><span class="k"></span></span></td>
<td><span style="color:#1890ff">2</span>笔</td>
<td><span class="tags"><span class="tag tb"><svg style="" width="14" height="14" viewBox="0 0 1024 1024"><path fill="#1890ff" d="M942.2 486.2C847.4 286.5 704.1 186 512 186c-192.2 0-335.4 100.5-430.2 300.3a60.3 60.3 0 000 51.5C176.6 737.5 319.9 838 512 838c192.2 0 335.4-100.5 430.2-300.3 7.7-16.2 7.7-35 0-51.5zM512 766c-161.3 0-279.4-81.8-362.7-254C232.6 339.8 350.7 258 512 258c161.3 0 279.4 81.8 362.7 254C791.5 684.2 673.4 766 512 766zm-4-430c-97.2 0-176 78.8-176 176s78.8 176 176 176 176-78.8 176-176-78.8-176-176-176zm0 288c-61.9 0-112-50.1-112-112s50.1-112 112-112 112 50.1 112 112-50.1 112-112 112z"/></svg><span style="letter-spacing:-.25px">37445.80</span></span><span class="tag tr"><svg style="" width="14" height="14" viewBox="0 0 1024 1024"><path fill="#cf1322" d="M942.2 486.2C847.4 286.5 704.1 186 512 186c-192.2 0-335.4 100.5-430.2 300.3a60.3 60.3 0 000 51.5C176.6 737.5 319.9 838 512 838c192.2 0 335.4-100.5 430.2-300.3 7.7-16.2 7.7-35 0-51.5zM512 766c-161.3 0-279.4-81.8-362.7-254C232.6 339.8 350.7 258 512 258c161.3 0 279.4 81.8 362.7 254C791.5 684.2 673.4 766 512 766zm-4-430c-97.2 0-176 78.8-176 176s78.8 176 176 176 176-78.8 176-176-78.8-176-176-176zm0 288c-61.9 0-112-50.1-112-112s50.1-112 112-112 112 50.1 112 112-50.1 112-112 112z"/></svg>个人报表</span></span></td>
<td>0.00</td><td>0.00</td><td>0.00</td>
<td><span class="dot"></span>用户</td>
<td>注册时间<span style="letter-spacing:-.2px">:2023-01-03 12:33</span><br>最近登录<span style="letter-spacing:-.2px">:2023-01-02 14:54</span><br>登录<span style="letter-spacing:-.45px">Ip:0.0.0.0</span></td>
<td class="act"><a class="red">设置代理</a><a>编辑</a><a>充值</a><a>控制</a></td>
</tr>
</table>
</div>
</body></html>
